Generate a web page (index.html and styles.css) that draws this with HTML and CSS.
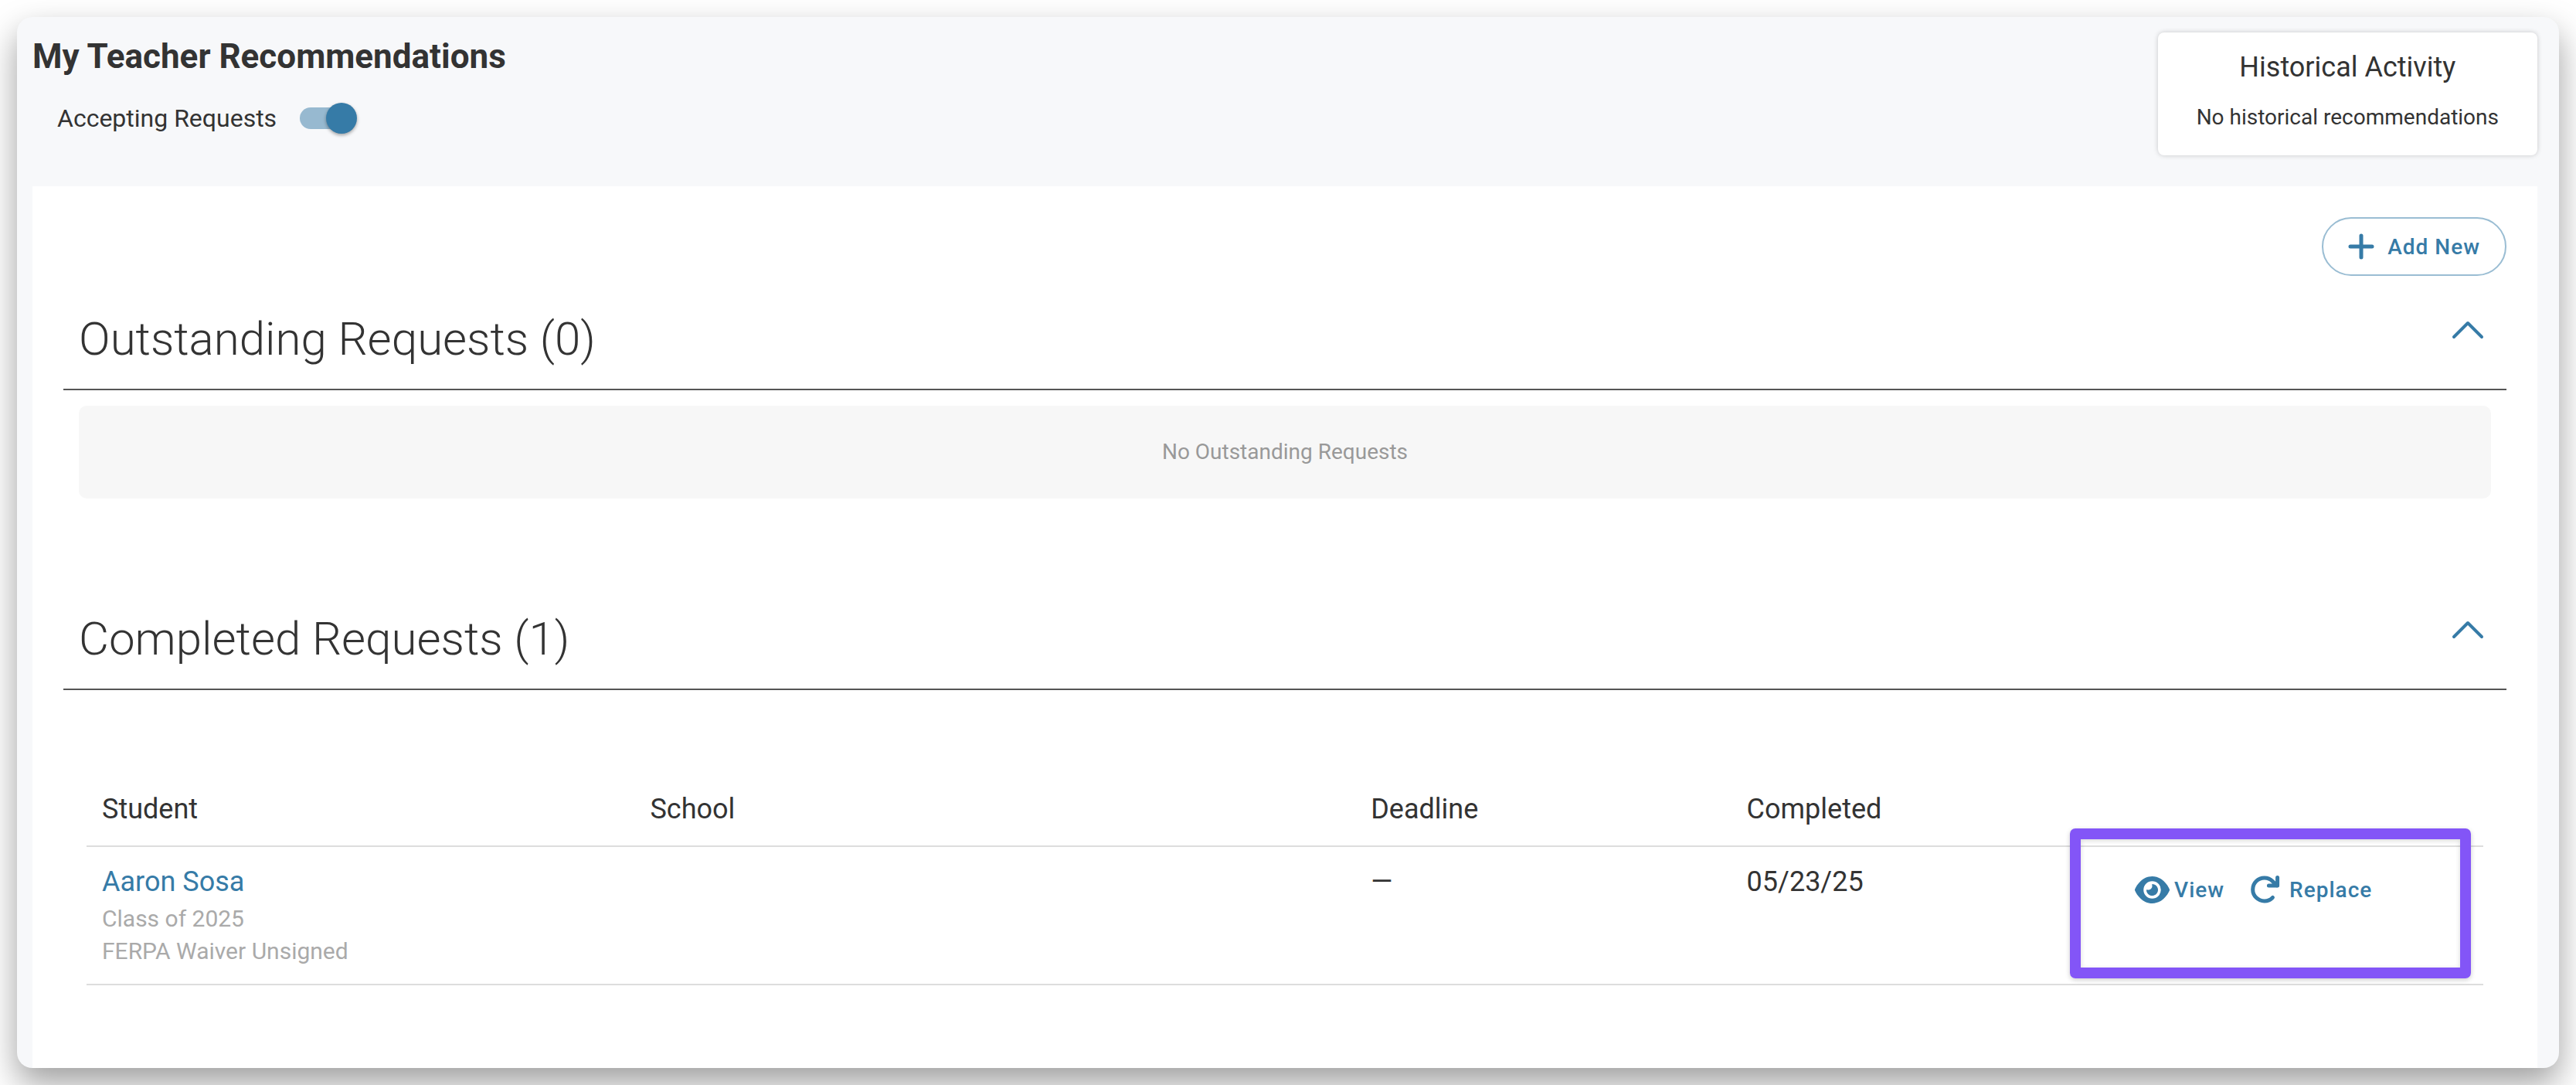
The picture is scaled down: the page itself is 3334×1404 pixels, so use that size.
FILE: index.html
```html
<!DOCTYPE html>
<html lang="en">
<head>
    <meta charset="UTF-8">
    <meta name="viewport" content="width=device-width, initial-scale=1.0">
    <title>My Teacher Recommendations</title>
    <link rel="stylesheet" href="styles.css">
</head>
<body>
    <div class="window">
        <header class="top">
            <div class="intro">
                <h1>My Teacher Recommendations</h1>
                <div class="accepting">
                    <label for="accepting">Accepting Requests</label>
                    <input type="checkbox" id="accepting" class="toggle" role="switch" checked>
                </div>
            </div>
            <aside class="history">
                <h2>Historical Activity</h2>
                <p>No historical recommendations</p>
            </aside>
        </header>

        <main class="panel">
            <button type="button" class="add">
                <svg width="34" height="34" viewBox="0 0 34 34"><path d="M17 3v28M3 17h28"/></svg>
                Add New
            </button>

            <section class="outstanding">
                <div class="section-head">
                    <h2>Outstanding Requests (0)</h2>
                    <button type="button" class="collapse" aria-label="Collapse outstanding requests">
                        <svg width="48" height="48" viewBox="0 0 48 48"><path d="M6 33L24 15l18 18"/></svg>
                    </button>
                </div>
                <p class="empty">No Outstanding Requests</p>
            </section>

            <section class="completed">
                <div class="section-head">
                    <h2>Completed Requests (1)</h2>
                    <button type="button" class="collapse" aria-label="Collapse completed requests">
                        <svg width="48" height="48" viewBox="0 0 48 48"><path d="M6 33L24 15l18 18"/></svg>
                    </button>
                </div>
                <div class="table-wrap">
                    <table>
                        <thead>
                            <tr>
                                <th class="col-student">Student</th>
                                <th class="col-school">School</th>
                                <th class="col-deadline">Deadline</th>
                                <th class="col-completed">Completed</th>
                                <th></th>
                            </tr>
                        </thead>
                        <tbody>
                            <tr>
                                <td>
                                    <a href="#" class="name">Aaron Sosa</a>
                                    <div class="meta">Class of 2025</div>
                                    <div class="meta">FERPA Waiver Unsigned</div>
                                </td>
                                <td></td>
                                <td>—</td>
                                <td>05/23/25</td>
                                <td class="actions-cell">
                                    <div class="actions">
                                        <button type="button" class="view">
                                            <svg width="45" height="35" viewBox="0 32 576 448"><path d="M288 32c-80.8 0-145.5 36.8-192.6 80.6C48.6 156 17.3 208 2.5 243.7c-3.3 7.9-3.3 16.7 0 24.6C17.3 304 48.6 356 95.4 399.4C142.5 443.2 207.2 480 288 480s145.5-36.8 192.6-80.6c46.8-43.5 78.1-95.4 93-131.1c3.3-7.9 3.3-16.7 0-24.6c-14.9-35.7-46.2-87.7-93-131.1C433.5 68.8 368.8 32 288 32zM144 256a144 144 0 1 1 288 0 144 144 0 1 1 -288 0zm144-64c0 35.3-28.7 64-64 64c-7.1 0-13.9-1.2-20.3-3.3c-5.5-1.8-11.9 1.6-11.7 7.4c.3 6.9 1.3 13.8 3.2 20.7c13.7 51.2 66.4 81.6 117.6 67.9s81.6-66.4 67.9-117.6c-11.1-41.5-47.8-69.4-88.6-71.1c-5.8-.2-9.2 6.1-7.4 11.7c2.1 6.4 3.3 13.2 3.3 20.3z"/></svg>
                                            View
                                        </button>
                                        <button type="button" class="replace">
                                            <svg width="38" height="36" viewBox="0 0 38 36"><path d="M28.4 28.4A15 15 0 1 1 28.4 7.4L34 13M34.6 2.6V13H23.4"/></svg>
                                            Replace
                                        </button>
                                    </div>
                                    <div class="highlight"></div>
                                </td>
                            </tr>
                        </tbody>
                    </table>
                </div>
            </section>
        </main>
    </div>
</body>
</html>
```
FILE: styles.css
```css
*{box-sizing: border-box;}
body{
    margin: 0;
    padding: 22px;
    background: #fff;
    color: #333;
    font-family: Roboto, "Liberation Sans", sans-serif;
    font-size: 36px;
}
h1, h2, p{margin: 0;}
button{
    border: 0;
    padding: 0;
    background: none;
    color: #367ba7;
    font-family: inherit;
    font-size: 28px;
    font-weight: 500;
    letter-spacing: 1px;
    cursor: pointer;
}
svg{
    display: block;
    flex: none;
}
/* outer window */
.window{
    display: flex;
    flex-direction: column;
    min-height: calc(100vh - 44px);
    padding: 20px 28px 0 20px;
    border-radius: 20px;
    background: #f7f8fa;
    box-shadow: 0 20px 44px rgba(0, 0, 0, .38);
}
/* header */
.top{
    display: flex;
    justify-content: space-between;
    align-items: flex-start;
    margin-bottom: 40px;
}
h1{
    font-size: 44px;
    line-height: 62px;
    font-weight: 700;
}
.accepting{
    display: flex;
    align-items: center;
    gap: 30px;
    margin-top: 28px;
    padding-left: 32px;
    font-size: 32px;
    line-height: 42px;
}
/* slide toggle */
.toggle{
    appearance: none;
    position: relative;
    width: 72px;
    height: 28px;
    margin: 0;
    border-radius: 14px;
    background: #c4c4c4;
}
.toggle::before{
    content: "";
    position: absolute;
    top: -6px;
    left: -2px;
    width: 40px;
    height: 40px;
    border-radius: 50%;
    background: #fff;
    box-shadow: 0 2px 4px rgba(0, 0, 0, .35);
}
.toggle:checked{background: #97b9d0;}
.toggle:checked::before{
    left: 34px;
    background: #367ba7;
}
.history{
    padding: 23px 50px 31px;
    border-radius: 8px;
    background: #fff;
    box-shadow: 0 0 6px rgba(0, 0, 0, .2);
    text-align: center;
}
.history h2{
    font-size: 36px;
    line-height: 44px;
    font-weight: 400;
}
.history p{
    margin-top: 25px;
    font-size: 28px;
    line-height: 36px;
}
/* white area */
.panel{
    display: flex;
    flex-direction: column;
    flex: 1;
    padding: 40px;
    background: #fff;
}
.add{
    display: flex;
    align-items: center;
    align-self: flex-end;
    gap: 17px;
    height: 76px;
    padding: 0 32px;
    border: 2px solid #9abdd3;
    border-radius: 38px;
}
.add svg, .collapse svg, .replace svg{
    fill: none;
    stroke: #367ba7;
    stroke-linecap: round;
    stroke-linejoin: round;
}
.add svg{stroke-width: 5;}
.collapse svg{stroke-width: 4;}
.replace svg{stroke-width: 5;}
.view svg{fill: #367ba7;}
/* sections */
.outstanding{margin-top: 46px;}
.completed{margin-top: 146px;}
.section-head{
    display: flex;
    justify-content: space-between;
    align-items: flex-start;
    padding: 0 26px 28px 20px;
    border-bottom: 2px solid #555;
}
.section-head h2{
    font-size: 60px;
    line-height: 72px;
    font-weight: 300;
}
.empty{
    margin: 20px 20px 0;
    padding: 40px;
    border-radius: 10px;
    background: #f7f7f7;
    color: #999;
    font-size: 28px;
    line-height: 40px;
    text-align: center;
}
/* table */
.table-wrap{
    margin-top: 112px;
    padding: 0 30px;
}
table{
    width: 100%;
    table-layout: fixed;
    border-spacing: 0;
}
th, td{
    border-bottom: 2px solid #ddd;
    text-align: left;
    vertical-align: top;
}
th{
    padding: 20px 20px 25px;
    font-weight: 400;
    line-height: 44px;
}
td{
    padding: 20px 20px 21px;
    line-height: 50px;
}
.col-student{width: 22.87%;}
.col-school{width: 30.07%;}
.col-deadline{width: 15.68%;}
.col-completed{width: 16.2%;}
.name{
    display: block;
    margin-bottom: 2px;
    color: #367ba7;
    text-decoration: none;
}
.meta{
    color: #aaa;
    font-size: 30px;
    line-height: 42px;
}
.actions-cell{position: relative;}
.actions{
    display: flex;
    align-items: center;
    gap: 34px;
    height: 70px;
}
.actions button{
    display: flex;
    align-items: center;
}
.actions .view{gap: 6px;}
.actions .replace{gap: 12px;}
/* frame round the row actions */
.highlight{
    position: absolute;
    inset: -24px 16px 7px -64px;
    border: 14px solid #8355f7;
    border-radius: 7px;
    box-shadow: 0 2px 6px rgba(0, 0, 0, .2), inset 0 2px 6px rgba(0, 0, 0, .15);
    pointer-events: none;
}
```
